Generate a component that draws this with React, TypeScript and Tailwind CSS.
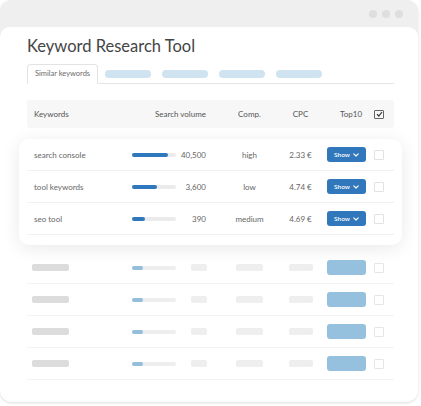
import React from "react";

const font = { fontFamily: "Lato, 'Noto Sans', sans-serif" };

const rows = [
  { k: "search console", fill: 36, v: "40,500", c: "high", p: "2.33 €" },
  { k: "tool keywords", fill: 25, v: "3,600", c: "low", p: "4.74 €" },
  { k: "seo tool", fill: 13, v: "390", c: "medium", p: "4.69 €" },
];

const grid = "grid grid-cols-[103px_82px_75px_27px_60px_20px] items-center";

function Chevron() {
  return (
    <svg width="6" height="4" viewBox="0 0 6 4" className="ml-[3px]">
      <path d="M0.8 0.8 L3 3 L5.2 0.8" fill="none" stroke="white" strokeWidth="1.2" strokeLinecap="round" strokeLinejoin="round" />
    </svg>
  );
}

export default function App() {
  return (
    <div className="w-[421px] h-[406px] bg-white" style={font}>
      <div className="w-[418px] h-[402px] rounded-[12px] bg-[#efefef] shadow-[0_1px_3px_rgba(0,0,0,0.14)] flex flex-col overflow-hidden">
        <div className="h-[27px] shrink-0 flex items-center justify-end gap-[5px] pr-[15px]">
          <div className="w-[8px] h-[8px] rounded-full bg-[#dedede]" />
          <div className="w-[8px] h-[8px] rounded-full bg-[#dedede]" />
          <div className="w-[8px] h-[8px] rounded-full bg-[#dedede]" />
        </div>
        <div className="flex-1 bg-white rounded-t-[10px] pl-[27px] pr-[24px] pt-[8px]">
          <h1 className="text-[16.5px] leading-[22px] text-[#454545] font-normal">Keyword Research Tool</h1>
          <div className="mt-[7px] flex items-end border-b border-[#e6e6e6] h-[20px]">
            <div className="h-[20px] w-[71px] -mb-px border border-[#e3e3e3] border-b-white bg-white rounded-t-[4px] flex items-center justify-center text-[7.5px] text-[#6b6b6b]">
              Similar keywords
            </div>
            <div className="flex gap-[11px] ml-[7px] self-center">
              <div className="w-[46px] h-[8px] rounded-full bg-[#cfe3f1]" />
              <div className="w-[46px] h-[8px] rounded-full bg-[#cfe3f1]" />
              <div className="w-[46px] h-[8px] rounded-full bg-[#cfe3f1]" />
              <div className="w-[46px] h-[8px] rounded-full bg-[#cfe3f1]" />
            </div>
          </div>

          <div className={`${grid} mt-[16px] h-[28px] bg-[#f7f7f7] rounded-[3px] text-[8px] text-[#555555]`}>
            <div className="pl-[7px]">Keywords</div>
            <div className="text-right pr-[6px]">Search volume</div>
            <div className="text-center">Comp.</div>
            <div className="text-center">CPC</div>
            <div className="pl-[26px]">Top10</div>
            <div>
              <div className="w-[10px] h-[9px] border border-[#666666] rounded-[1px] flex items-center justify-center">
                <svg width="7" height="6" viewBox="0 0 7 6">
                  <path d="M1 3.2 L2.8 5 L6 1" fill="none" stroke="#333" strokeWidth="1.2" />
                </svg>
              </div>
            </div>
          </div>

          <div className="-mx-[8px] px-[8px] mt-[11px] pb-[10px] bg-white rounded-[10px] shadow-[0_3px_18px_rgba(0,0,0,0.09)]">
            {rows.map((r) => (
              <div key={r.k} className={`${grid} h-[32px] border-b border-[#f1f1f1] text-[8px] text-[#666666]`}>
                <div className="pl-[7px]">{r.k}</div>
                <div className="flex items-center justify-between pl-[2px] pr-[6px]">
                  <div className="w-[44px] h-[4px] rounded-full bg-[#ebebeb]">
                    <div className="h-[4px] rounded-full bg-[#2f78bd]" style={{ width: r.fill }} />
                  </div>
                  <span>{r.v}</span>
                </div>
                <div className="text-center">{r.c}</div>
                <div className="text-center">{r.p}</div>
                <div className="pl-[13px]">
                  <div className="w-[39px] h-[15px] rounded-[3px] bg-[#3077bb] flex items-center justify-center text-[6.5px] text-white font-semibold">
                    Show
                    <Chevron />
                  </div>
                </div>
                <div>
                  <div className="w-[10px] h-[10px] border border-[#e2e2e2] rounded-[1px]" />
                </div>
              </div>
            ))}
          </div>

          <div className="mt-[7px]">
            {[0, 1, 2, 3].map((i) => (
              <div key={i} className={`${grid} h-[32px] border-b border-[#f3f3f3]`}>
                <div className="pl-[5px]">
                  <div className="w-[37px] h-[7px] rounded-[2px] bg-[#dcdcdc]" />
                </div>
                <div className="flex items-center justify-between pl-[2px] pr-[5px]">
                  <div className="w-[44px] h-[4px] rounded-full bg-[#eeeeee]">
                    <div className="w-[11px] h-[4px] rounded-full bg-[#93bfdd]" />
                  </div>
                  <div className="w-[16px] h-[7px] rounded-[2px] bg-[#eeeeee]" />
                </div>
                <div className="pl-[24px]">
                  <div className="w-[27px] h-[7px] rounded-[2px] bg-[#eeeeee]" />
                </div>
                <div className="pl-[2px]">
                  <div className="w-[24px] h-[7px] rounded-[2px] bg-[#eeeeee]" />
                </div>
                <div className="pl-[13px]">
                  <div className="w-[39px] h-[15px] rounded-[3px] bg-[#95c0de]" />
                </div>
                <div>
                  <div className="w-[10px] h-[10px] border-[1.5px] border-[#e6e6e6] rounded-[1px]" />
                </div>
              </div>
            ))}
          </div>
        </div>
      </div>
    </div>
  );
}
